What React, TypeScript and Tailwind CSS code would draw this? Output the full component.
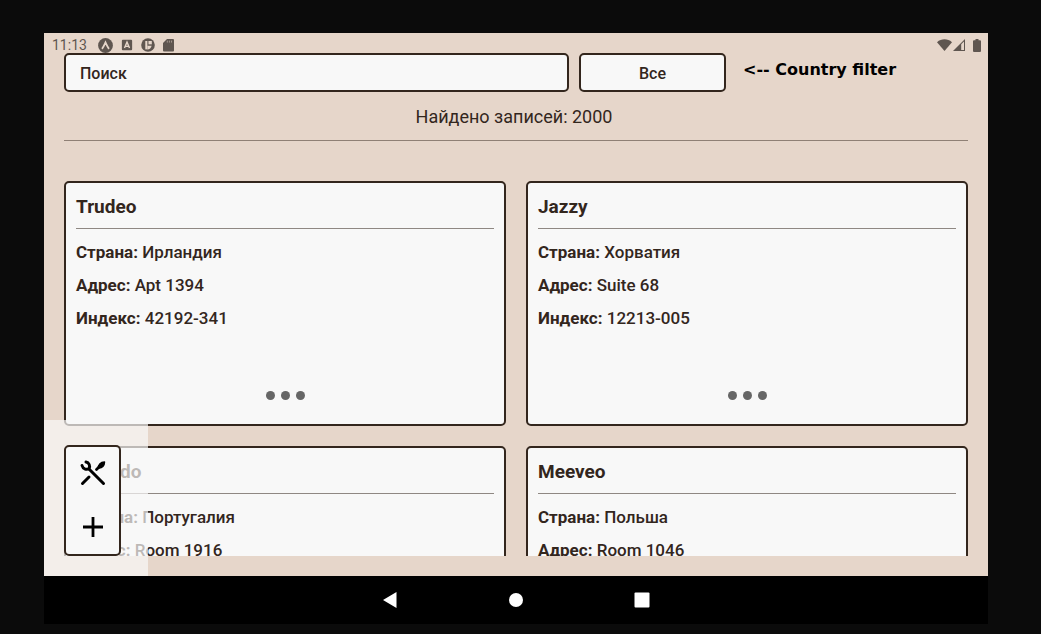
import { useState } from "react";

type Company = { name: string; country: string; address: string; zip: string };

const companies: Company[] = [
  { name: "Trudeo", country: "Ирландия", address: "Apt 1394", zip: "42192-341" },
  { name: "Jazzy", country: "Хорватия", address: "Suite 68", zip: "12213-005" },
  { name: "Camido", country: "Португалия", address: "Room 1916", zip: "0268-1174" },
  { name: "Meeveo", country: "Польша", address: "Room 1046", zip: "55154-5074" },
];

function StatusBar() {
  return (
    <div className="flex h-5 shrink-0 items-center justify-between pt-1 pr-[7px] pl-2 text-[#5f5650]">
      <div className="flex items-center">
        <span className="w-[46px] text-sm leading-4">11:13</span>
        <div className="flex items-center gap-[7px]">
          <svg viewBox="0 0 15 15" className="size-[15px]">
            <circle cx="7.5" cy="7.5" r="7.4" fill="currentColor" />
            <path d="M4 10.8C5.5 9 6.5 6.5 7.5 4.4 8.5 6.5 9.5 9 11 10.8" fill="none" stroke="#e6d6ca" strokeWidth="1.8" />
          </svg>
          <svg viewBox="0 0 15 15" className="size-[14px]">
            <rect x="2" y="2" width="11" height="11" rx="1" fill="currentColor" />
            <path d="M4.8 10.8 7.5 4.4l2.7 6.4M5.8 9h3.4" fill="none" stroke="#e6d6ca" strokeWidth="1.5" />
          </svg>
          <svg viewBox="0 0 15 15" className="size-[14px]">
            <circle cx="7.5" cy="7.5" r="7.3" fill="currentColor" />
            <path d="M4.6 3.2h2.2v9H4.600z" fill="#e6d6ca" />
            <path d="M8 3.200h3.600v3.600H8z" fill="#e6d6ca" />
            <path d="M6.800 8.200h4.600c-.6 2.400-2.200 3.800-4.600 4z" fill="#e6d6ca" />
          </svg>
          <svg viewBox="0 0 13 14" className="h-[14px] w-[13px]">
            <path d="M5 1h6a1 1 0 0 1 1 1v10.5a1 1 0 0 1-1 1H2a1 1 0 0 1-1-1V5z" fill="currentColor" />
            <path d="M5.3 2.6v2M7.4 2.6v2M9.5 2.6v2" stroke="#e6d6ca" strokeWidth="0.5" />
          </svg>
        </div>
      </div>
      <div className="flex items-center">
        <svg viewBox="0 0 15 12" className="h-3 w-[15px]">
          <path d="M7.5 12 0 3.2C4.4-.6 10.6-.6 15 3.2z" fill="currentColor" />
        </svg>
        <svg viewBox="0 0 13 12" className="ml-px h-3 w-[13px]">
          <path d="M0 12 12 0v12z" fill="currentColor" />
          <path d="M8.2 5.2 11 2.4v8.6H8.2z" fill="#e6d6ca" />
        </svg>
        <svg viewBox="0 0 8 13" className="ml-[7px] h-[13px] w-2">
          <path d="M2.5 0h3v1.2H7a1 1 0 0 1 1 1V12a1 1 0 0 1-1 1H1a1 1 0 0 1-1-1V2.2a1 1 0 0 1 1-1h1.5z" fill="currentColor" />
        </svg>
      </div>
    </div>
  );
}

function Field({ label, value }: { label: string; value: string }) {
  return (
    <p className="text-[17px] leading-5">
      <span className="font-bold">{label}:</span> {value}
    </p>
  );
}

function Card({ company }: { company: Company }) {
  return (
    <article className="flex h-[245px] flex-col rounded-[5px] border-2 border-[#33261d] bg-[#f8f8f8] px-2.5 pt-3">
      <h2 className="border-b border-[#8f8883] pb-[9px] text-[19px] leading-6 font-bold">{company.name}</h2>
      <div className="flex flex-col gap-[13px] pt-[13px] font-medium">
        <Field label="Страна" value={company.country} />
        <Field label="Адрес" value={company.address} />
        <Field label="Индекс" value={company.zip} />
      </div>
      <button type="button" aria-label="Подробнее" className="mx-auto mt-auto mb-5 flex gap-1.5 py-1">
        <span className="size-[9px] rounded-full bg-[#666]" />
        <span className="size-[9px] rounded-full bg-[#666]" />
        <span className="size-[9px] rounded-full bg-[#666]" />
      </button>
    </article>
  );
}

function ActionPanel() {
  return (
    <div className="absolute bottom-0 left-0 bg-[#f8f8f8]/70 pt-[25px] pr-[27px] pb-5 pl-5">
      <div className="flex h-[111px] w-[57px] flex-col items-center justify-between rounded-[5px] border-2 border-[#33261d] bg-[#f8f8f8] pt-[13px] pb-[17px] text-black">
        <button type="button" aria-label="Настройки">
          <svg viewBox="0 0 26 26" className="size-[26px]" fill="none" stroke="currentColor" strokeLinecap="round">
            <path d="M9 9 23.5 23.5" strokeWidth="3" />
            <path d="M2.5 23.5 9 17" strokeWidth="3" />
            <path d="M2 5.5C3 9.5 7 10 9 8.5 10.5 6 9 2.5 6 2" strokeWidth="3" />
            <path d="M16.5 9.5 20 6" strokeWidth="2.8" />
            <path d="M18.5 8C18 5 20.500 2.200 24.500 2 24.500 5.500 22 8.500 18.500 8z" fill="currentColor" strokeWidth="1.5" strokeLinejoin="round" />
          </svg>
        </button>
        <button type="button" aria-label="Добавить">
          <svg viewBox="0 0 20 20" className="size-5" stroke="currentColor" strokeWidth="2.8">
            <path d="M10 0v20M0 10h20" />
          </svg>
        </button>
      </div>
    </div>
  );
}

function NavBar() {
  return (
    <nav className="flex h-12 shrink-0 items-center justify-center bg-black text-white">
      <button type="button" aria-label="Назад" className="flex w-[126px] justify-center">
        <svg viewBox="0 0 16 16" className="size-4" fill="currentColor">
          <path d="M1 8 14.5 0v16z" />
        </svg>
      </button>
      <button type="button" aria-label="Домой" className="flex w-[126px] justify-center">
        <svg viewBox="0 0 16 16" className="size-4" fill="currentColor">
          <circle cx="8" cy="8" r="7" />
        </svg>
      </button>
      <button type="button" aria-label="Недавние" className="flex w-[126px] justify-center">
        <svg viewBox="0 0 16 16" className="size-4" fill="currentColor">
          <rect x="0.5" y="0.5" width="15" height="15" rx="1" />
        </svg>
      </button>
    </nav>
  );
}

export default function App() {
  const [query, setQuery] = useState("");
  const shown = companies.filter((c) => c.name.toLowerCase().includes(query.toLowerCase()));

  return (
    <div className="flex h-screen flex-col bg-[#0b0b0b] pt-[33px] pr-[53px] pb-2.5 pl-11 font-['Roboto',sans-serif] text-[#33261d]">
      <div className="relative flex min-h-0 flex-1 flex-col bg-[#e6d6ca]">
        <StatusBar />
        <main className="flex min-h-0 flex-1 flex-col px-5 pb-5">
          <div className="flex items-start">
            <input
              type="text"
              aria-label="Поиск"
              placeholder="Поиск"
              value={query}
              onChange={(e) => setQuery(e.target.value)}
              className="h-[39px] min-w-0 flex-1 rounded-[5px] border-2 border-[#33261d] bg-[#f8f8f8] px-3.5 pt-0.5 text-base font-medium placeholder:text-[#33261d] placeholder:opacity-100"
            />
            <select
              id="country"
              className="ml-2.5 h-[39px] w-[147px] appearance-none rounded-[5px] border-2 border-[#33261d] bg-[#f8f8f8] pt-0.5 text-center text-base font-medium"
            >
              <option>Все</option>
              <option>Ирландия</option>
              <option>Хорватия</option>
              <option>Португалия</option>
              <option>Польша</option>
            </select>
            <label htmlFor="country" className="w-[242px] pt-[5px] pl-[17px] font-['DejaVu_Sans',sans-serif] text-base font-bold text-black">
              &lt;-- Country filter
            </label>
          </div>
          <p className="border-b border-[#8f8075] pt-[13px] pr-1 pb-3 text-center text-lg leading-[23px]">Найдено записей: 2000</p>
          <div className="mt-10 grid min-h-0 flex-1 auto-rows-max grid-cols-2 content-start gap-5 overflow-hidden">
            {shown.map((c) => (
              <Card key={c.name} company={c} />
            ))}
          </div>
        </main>
        <ActionPanel />
      </div>
      <NavBar />
    </div>
  );
}
